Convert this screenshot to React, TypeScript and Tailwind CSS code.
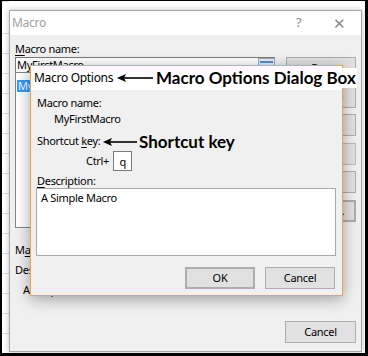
import React from 'react';

const ui = { fontFamily: '"Noto Sans", "Open Sans", sans-serif' };
const note = { fontFamily: 'Lato, "Liberation Sans", sans-serif' };

const Arrow = ({ w }: { w: number }) => (
  <svg width={w} height={10} viewBox={`0 0 ${w} 10`} className="shrink-0">
    <path d={`M0 5 L9 1 L7 5 L9 9 Z`} fill="#000" />
    <line x1={6} y1={5} x2={w} y2={5} stroke="#000" strokeWidth={1.6} />
  </svg>
);

const Btn = ({ label, className = '' }: { label: string; className?: string }) => (
  <div
    className={`h-[22px] w-[70px] flex items-center justify-center border border-[#adadad] bg-[#e1e1e1] text-[11px] text-black ${className}`}
  >
    {label}
  </div>
);

const RefEditIcon = () => (
  <svg width={17} height={15} viewBox="0 0 17 15">
    <rect x={0.5} y={0.5} width={16} height={14} fill="#e8eef6" stroke="#9aa9bd" />
    <rect x={2} y={3} width={13} height={2} fill="#5b8fd0" />
    <rect x={2} y={7} width={6} height={1} fill="#8aa4c8" />
    <rect x={9} y={7} width={5} height={1} fill="#d04a3a" />
    <rect x={2} y={10} width={13} height={1} fill="#8aa4c8" />
  </svg>
);

export default function App() {
  return (
    <div
      style={ui}
      className="relative w-[368px] h-[356px] overflow-hidden bg-white border-black border-l-2 border-t border-r-[3px] border-b-[3px] pl-[7px] pt-[9px] text-[11px] tracking-[-0.3px] text-black"
    >
      {/* faint sheet grid behind the dialog */}
      <div className="absolute inset-0 bg-[repeating-linear-gradient(to_bottom,transparent_0px,transparent_19px,#dcdcdc_19px,#dcdcdc_20px)] bg-[position:0_13px] w-[7px]" />

      {/* Macro dialog */}
      <div className="relative w-[353px] h-[342px] flex flex-col border border-[#a8a8a8] bg-[#f0f0f0] shadow-[0_0_6px_rgba(0,0,0,0.25)]">
        <div className="h-[24px] bg-white flex items-center pl-[2px] pr-[15px] text-[12px] text-[#a0a0a0]">
          <span>Macro</span>
          <span className="ml-auto text-[13px] text-[#8a8a8a]">?</span>
          <span className="ml-[32px] text-[15px] font-light text-[#8a8a8a]">✕</span>
        </div>

        <div className="flex-1 flex flex-col px-[5px] pb-[8px]">
          <div className="flex">
            <div className="w-[260px] flex flex-col">
              <div className="pt-[6px] leading-[16px]">
                <span className="underline underline-offset-2">M</span>acro name:
              </div>
              <div className="h-[15px] flex items-center border border-[#7a7a7a] border-b-0 bg-white pl-[1px]">
                <span>MyFirstMacro</span>
                <div className="ml-auto -mr-[1px]">
                  <RefEditIcon />
                </div>
              </div>
              <div className="h-[156px] border border-[#828790] bg-white pt-[5px] pl-[1px]">
                <span className="bg-[#3399ff] text-white px-[1px] leading-[12px] inline-block">MyFirstMacro</span>
              </div>
            </div>
            <div className="ml-auto pt-[22px] flex flex-col gap-[6.6px]">
              <Btn label="Run" />
              <Btn label="Step Into" />
              <Btn label="Edit" />
              <Btn label="Create" className="bg-[#cccccc] border-[#bcbcbc] text-[#888]" />
              <Btn label="Delete" />
              <Btn label="Options..." className="border-2 border-[#0078d7]" />
            </div>
          </div>

          <div className="mt-[15px] leading-[14px]">
            M<span className="underline underline-offset-2">a</span>cros in:
          </div>
          <div className="mt-[6px] leading-[14px]">Description</div>
          <div className="mt-[6px] leading-[14px] pl-[8px]">A Simple Macro</div>

          <div className="mt-auto flex justify-end">
            <Btn label="Cancel" className="w-[71px]" />
          </div>
        </div>

        {/* Macro Options dialog */}
        <div className="absolute left-[20px] top-[54px] w-[313px] h-[231px] flex flex-col border border-[#eea54a] bg-[#f0f0f0] shadow-[0_3px_14px_rgba(0,0,0,0.35)]">
          <div className="h-[24px] bg-white flex items-center pl-[3px] text-[12px]">
            Macro Options
          </div>
          <div className="flex-1 flex flex-col pl-[5px] pr-[7px]">
            <div className="mt-[6px] ml-[1px] leading-[14px]">Macro name:</div>
            <div className="mt-[2px] ml-[18px] leading-[14px]">MyFirstMacro</div>
            <div className="mt-[8px] ml-[1px] leading-[14px]">
              Shortcut <span className="underline underline-offset-2">k</span>ey:
            </div>
            <div className="mt-[3px] ml-[50px] flex items-center">
              <span>Ctrl+</span>
              <div className="ml-[4px] w-[19px] h-[20px] border border-[#7a7a7a] bg-white flex items-center justify-center leading-none">
                q
              </div>
            </div>
            <div className="mt-[3px] ml-[1px] leading-[14px]">
              <span className="underline underline-offset-2">D</span>escription:
            </div>
            <div className="h-[68px] w-[300px] border border-[#a9a9a9] bg-white pl-[4px] pt-[2px] leading-[14px]">
              A Simple Macro
            </div>
            <div className="mt-[11px] flex justify-end gap-[10px]">
              <Btn label="OK" className="border-2 border-[#0078d7]" />
              <Btn label="Cancel" />
            </div>
          </div>
        </div>
      </div>

      {/* annotations */}
      <div className="absolute left-[115px] top-[67px] flex items-center gap-[2px]" style={note}>
        <Arrow w={36} />
        <span className="bg-white px-[1px] text-[17px] font-bold leading-[20px] tracking-normal">
          Macro Options Dialog Box
        </span>
      </div>
      <div className="absolute left-[101px] top-[131px] flex items-center gap-[2px]" style={note}>
        <Arrow w={34} />
        <span className="text-[17px] font-bold leading-[20px] tracking-normal">Shortcut key</span>
      </div>
    </div>
  );
}
